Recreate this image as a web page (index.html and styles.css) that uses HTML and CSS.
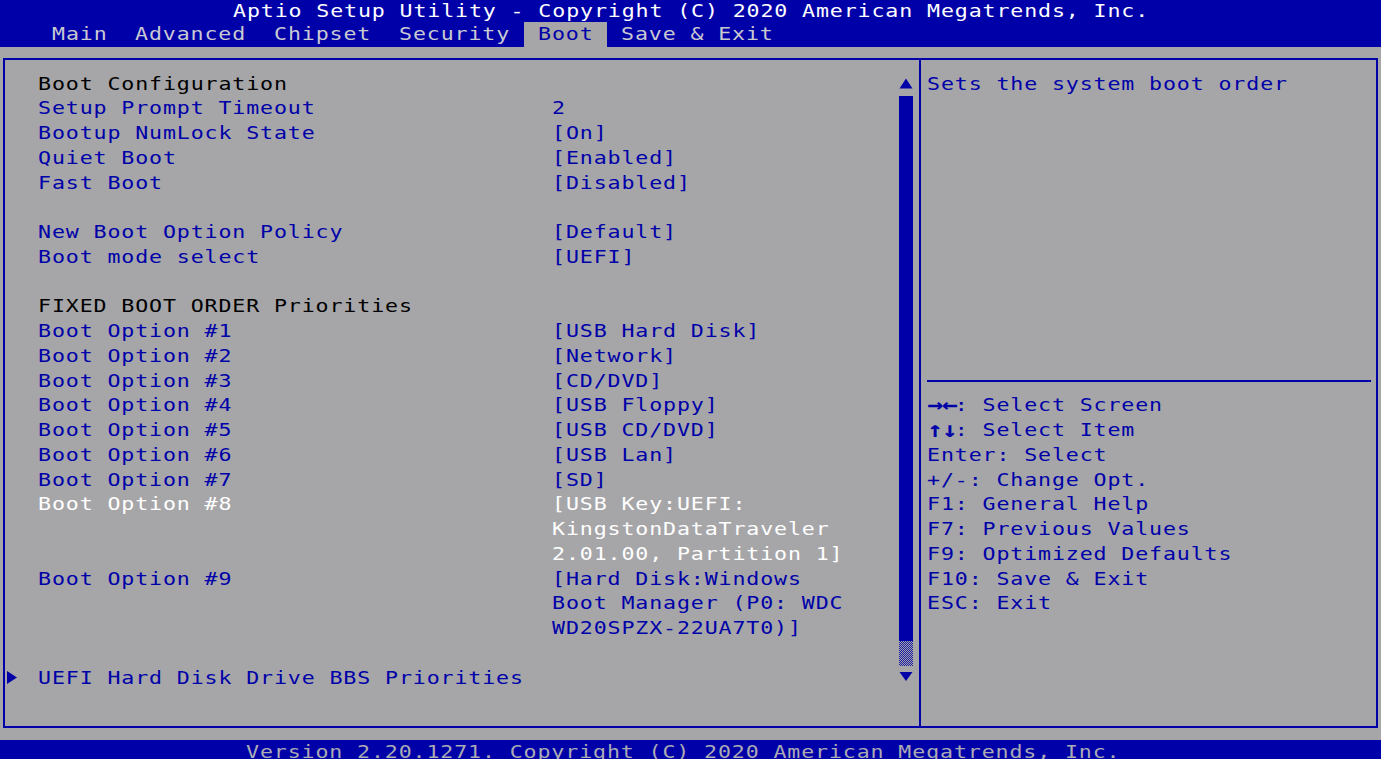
FILE: index.html
```html
<!DOCTYPE html>
<html>
<head>
<meta charset="utf-8">
<link rel="stylesheet" href="styles.css">
</head>
<body>
<div class="header">
  <div class="title"><span class="t">Aptio Setup Utility - Copyright (C) 2020 American Megatrends, Inc.</span></div>
  <div class="tabs">
    <div class="tab"><span class="t">Main</span></div>
    <div class="tab"><span class="t">Advanced</span></div>
    <div class="tab"><span class="t">Chipset</span></div>
    <div class="tab"><span class="t">Security</span></div>
    <div class="tab on"><span class="t">Boot</span></div>
    <div class="tab"><span class="t">Save &amp; Exit</span></div>
  </div>
</div>

<div class="frame">
  <div class="main">
    <div class="list">
      <div class="row"><span class="t lbl hd">Boot Configuration</span></div>
      <div class="row"><span class="t lbl">Setup Prompt Timeout</span><span class="t val">2</span></div>
      <div class="row"><span class="t lbl">Bootup NumLock State</span><span class="t val">[On]</span></div>
      <div class="row"><span class="t lbl">Quiet Boot</span><span class="t val">[Enabled]</span></div>
      <div class="row"><span class="t lbl">Fast Boot</span><span class="t val">[Disabled]</span></div>
      <div class="row"></div>
      <div class="row"><span class="t lbl">New Boot Option Policy</span><span class="t val">[Default]</span></div>
      <div class="row"><span class="t lbl">Boot mode select</span><span class="t val">[UEFI]</span></div>
      <div class="row"></div>
      <div class="row"><span class="t lbl hd">FIXED BOOT ORDER Priorities</span></div>
      <div class="row"><span class="t lbl">Boot Option #1</span><span class="t val">[USB Hard Disk]</span></div>
      <div class="row"><span class="t lbl">Boot Option #2</span><span class="t val">[Network]</span></div>
      <div class="row"><span class="t lbl">Boot Option #3</span><span class="t val">[CD/DVD]</span></div>
      <div class="row"><span class="t lbl">Boot Option #4</span><span class="t val">[USB Floppy]</span></div>
      <div class="row"><span class="t lbl">Boot Option #5</span><span class="t val">[USB CD/DVD]</span></div>
      <div class="row"><span class="t lbl">Boot Option #6</span><span class="t val">[USB Lan]</span></div>
      <div class="row"><span class="t lbl">Boot Option #7</span><span class="t val">[SD]</span></div>
      <div class="row sel"><span class="t lbl">Boot Option #8</span><span class="t val">[USB Key:UEFI:<br>KingstonDataTraveler<br>2.01.00, Partition 1]</span></div>
      <div class="row"><span class="t lbl">Boot Option #9</span><span class="t val">[Hard Disk:Windows<br>Boot Manager (P0: WDC<br>WD20SPZX-22UA7T0)]</span></div>
      <div class="row"></div>
      <div class="row">
        <span class="mark"><svg width="14" height="25" viewBox="0 0 14 25"><polygon points="2,5 12,11.5 2,18" fill="#0000a8"/></svg></span>
        <span class="t lbl">UEFI Hard Disk Drive BBS Priorities</span>
      </div>
    </div>
    <div class="scroll">
      <div class="sb-end"><svg width="14" height="25" viewBox="0 0 14 25"><polygon points="0.5,16.5 13.5,16.5 7,6.5" fill="#0000a8"/></svg></div>
      <div class="thumb"></div>
      <div class="track"></div>
      <div class="sb-end"><svg width="14" height="25" viewBox="0 0 14 25"><polygon points="0.5,6 13.5,6 7,15" fill="#0000a8"/></svg></div>
    </div>
  </div>
  <div class="help">
    <div class="desc"><span class="t">Sets the system boot order</span></div>
    <div class="sep"></div>
    <div class="keys">
      <div><span class="t"><b class="arr">→←</b>: Select Screen</span></div>
      <div><span class="t"><b class="arr">↑↓</b>: Select Item</span></div>
      <div><span class="t">Enter: Select</span></div>
      <div><span class="t">+/-: Change Opt.</span></div>
      <div><span class="t">F1: General Help</span></div>
      <div><span class="t">F7: Previous Values</span></div>
      <div><span class="t">F9: Optimized Defaults</span></div>
      <div><span class="t">F10: Save &amp; Exit</span></div>
      <div><span class="t">ESC: Exit</span></div>
    </div>
  </div>
</div>

<div class="footer"><span class="t">Version 2.20.1271. Copyright (C) 2020 American Megatrends, Inc.</span></div>
</body>
</html>
```

FILE: styles.css
```css
:root {
  --W: 13.88px;
  --u: 11.567px;
  --R: 24.75px;
  --blue: #0000a8;
  --gray: #a6a6a9;
}

html, body {
  margin: 0;
  padding: 0;
}

body {
  width: 1381px;
  height: 759px;
  overflow: hidden;
  background: var(--gray);
  font-family: "DejaVu Sans Mono", monospace;
  font-size: 18px;
  letter-spacing: 0.73px;
  line-height: var(--R);
  color: var(--blue);
}

.t {
  display: inline-block;
  white-space: nowrap;
  transform: scaleX(1.2);
  transform-origin: 0 50%;
}

.arr {
  display: inline-block;
  width: calc(var(--u) * 2);
  font-size: 22px;
  font-weight: bold;
  letter-spacing: -1px;
  vertical-align: top;
}

/* header */
.header {
  background: var(--blue);
  height: 47px;
}

.title {
  height: 22.25px;
  line-height: 22.25px;
  padding-left: 232.5px;
  color: #ffffff;
}

.tabs {
  display: grid;
  grid-template-columns:
    calc(var(--W) * 6) calc(var(--W) * 10) calc(var(--W) * 9)
    calc(var(--W) * 10) calc(var(--W) * 6) calc(var(--W) * 13);
  height: var(--R);
  padding-left: 38.2px;
  color: #c9c9d2;
}

.tab {
  padding-left: var(--W);
  height: var(--R);
}

.tab.on {
  background: var(--gray);
  color: var(--blue);
}

/* main frame */
.frame {
  display: flex;
  margin: 11px 0 0 3px;
  width: 1375px;
  height: 670px;
  box-sizing: border-box;
  border: 2px solid var(--blue);
}

.main {
  width: 914px;
  flex: none;
  display: flex;
  padding-top: 11.6px;
  box-sizing: border-box;
}

.list {
  width: 894px;
  flex: none;
}

.row {
  display: grid;
  grid-template-columns: 33.2px calc(var(--W) * 37) 1fr;
  min-height: var(--R);
}

.mark {
  grid-column: 1;
  height: var(--R);
}

.mark svg {
  display: block;
}

.lbl {
  grid-column: 2;
  align-self: start;
}

.val {
  grid-column: 3;
  align-self: start;
}

.hd {
  color: #000000;
  grid-column: 2 / span 2;
}

.sel {
  color: #ffffff;
}

/* scrollbar */
.scroll {
  width: 14px;
  flex: none;
  display: flex;
  flex-direction: column;
}

.sb-end {
  height: var(--R);
}

.sb-end svg {
  display: block;
}

.thumb {
  height: calc(var(--R) * 22);
  background: var(--blue);
}

.track {
  height: var(--R);
  background: repeating-conic-gradient(var(--blue) 0 25%, var(--gray) 0 50%) 0 0 / 2px 2px;
  opacity: 0.85;
}

/* help pane */
.help {
  flex: 1;
  border-left: 2px solid var(--blue);
  padding: 11.6px 5.3px 0 5.5px;
}

.desc {
  height: calc(var(--R) * 12);
}

.sep {
  height: var(--R);
  display: flex;
  align-items: center;
}

.sep::before {
  content: "";
  flex: 1;
  height: 2px;
  background: var(--blue);
}

.keys > div {
  height: var(--R);
}

/* footer */
.footer {
  margin-top: 12px;
  height: 19px;
  overflow: hidden;
  background: var(--blue);
  padding-left: 246.4px;
  color: #ababb4;
}
```
